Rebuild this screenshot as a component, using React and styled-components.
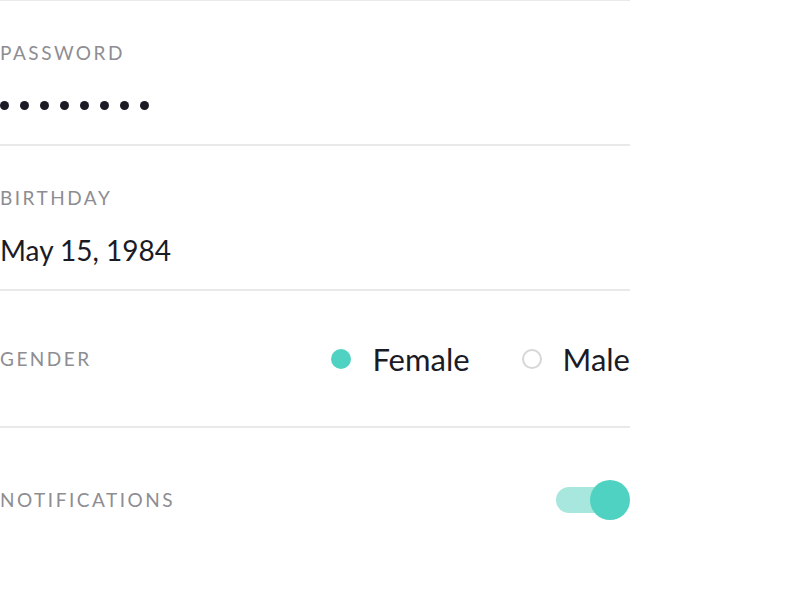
import React, { useState } from 'react';
import styled, { createGlobalStyle } from 'styled-components';

const Global = createGlobalStyle`
  html, body { margin: 0; background: #fff; }
  body { font-family: Lato, "Open Sans", sans-serif; }
`;

const Form = styled.div`
  width: 630px;
  border-top: 2px solid #e9e9e9;
  margin-top: -1px;
`;

const Field = styled.div`
  display: flex;
  flex-direction: column;
  gap: 22px;
  padding: 40px 0 21px;
  border-bottom: 2px solid #e9e9e9;
`;

const InlineField = styled.div`
  display: flex;
  align-items: center;
  justify-content: space-between;
  height: ${(p) => p.h}px;
  border-bottom: ${(p) => (p.last ? 'none' : '2px solid #e9e9e9')};
`;

const Label = styled.div`
  font-size: 19px;
  line-height: 24px;
  letter-spacing: 2.5px;
  color: #8d8d92;
  text-transform: uppercase;
`;

const Value = styled.div`
  font-size: 28px;
  line-height: 36px;
  color: #1b1b26;
`;

const Dots = styled.div`
  display: flex;
  align-items: center;
  gap: 11px;
  height: 36px;
`;

const Dot = styled.span`
  width: 9px;
  height: 9px;
  border-radius: 50%;
  background: #1b1b26;
`;

const Options = styled.div`
  display: flex;
  align-items: center;
  gap: 52px;
`;

const Option = styled.label`
  display: flex;
  align-items: center;
  gap: 21px;
  font-size: 31px;
  color: #1b1b26;
  cursor: pointer;
`;

const Radio = styled.span`
  box-sizing: border-box;
  width: 20px;
  height: 20px;
  border-radius: 50%;
  background: ${(p) => (p.on ? '#50d2c2' : '#fff')};
  border: ${(p) => (p.on ? 'none' : '2px solid #d6d6d6')};
`;

const Switch = styled.button`
  position: relative;
  width: 74px;
  height: 40px;
  padding: 0;
  border: none;
  background: none;
  cursor: pointer;

  &::before {
    content: '';
    position: absolute;
    left: 0;
    top: 7px;
    width: 56px;
    height: 26px;
    border-radius: 13px;
    background: ${(p) => (p.on ? '#a8e7de' : '#e2e2e2')};
  }

  &::after {
    content: '';
    position: absolute;
    top: 0;
    left: ${(p) => (p.on ? '34px' : '0')};
    width: 40px;
    height: 40px;
    border-radius: 50%;
    background: ${(p) => (p.on ? '#50d2c2' : '#fff')};
    transition: left 0.2s;
  }
`;

const App = () => {
  const [gender, setGender] = useState('female');
  const [notify, setNotify] = useState(true);

  return (
    <>
      <Global />
      <Form>
        <Field>
          <Label>Password</Label>
          <Dots>
            {Array.from({ length: 8 }).map((_, i) => (
              <Dot key={i} />
            ))}
          </Dots>
        </Field>
        <Field>
          <Label>Birthday</Label>
          <Value>May 15, 1984</Value>
        </Field>
        <InlineField h={135}>
          <Label>Gender</Label>
          <Options>
            <Option onClick={() => setGender('female')}>
              <Radio on={gender === 'female'} />
              Female
            </Option>
            <Option onClick={() => setGender('male')}>
              <Radio on={gender === 'male'} />
              Male
            </Option>
          </Options>
        </InlineField>
        <InlineField h={144} last>
          <Label>Notifications</Label>
          <Switch on={notify} onClick={() => setNotify(!notify)} />
        </InlineField>
      </Form>
    </>
  );
};

export default App;
